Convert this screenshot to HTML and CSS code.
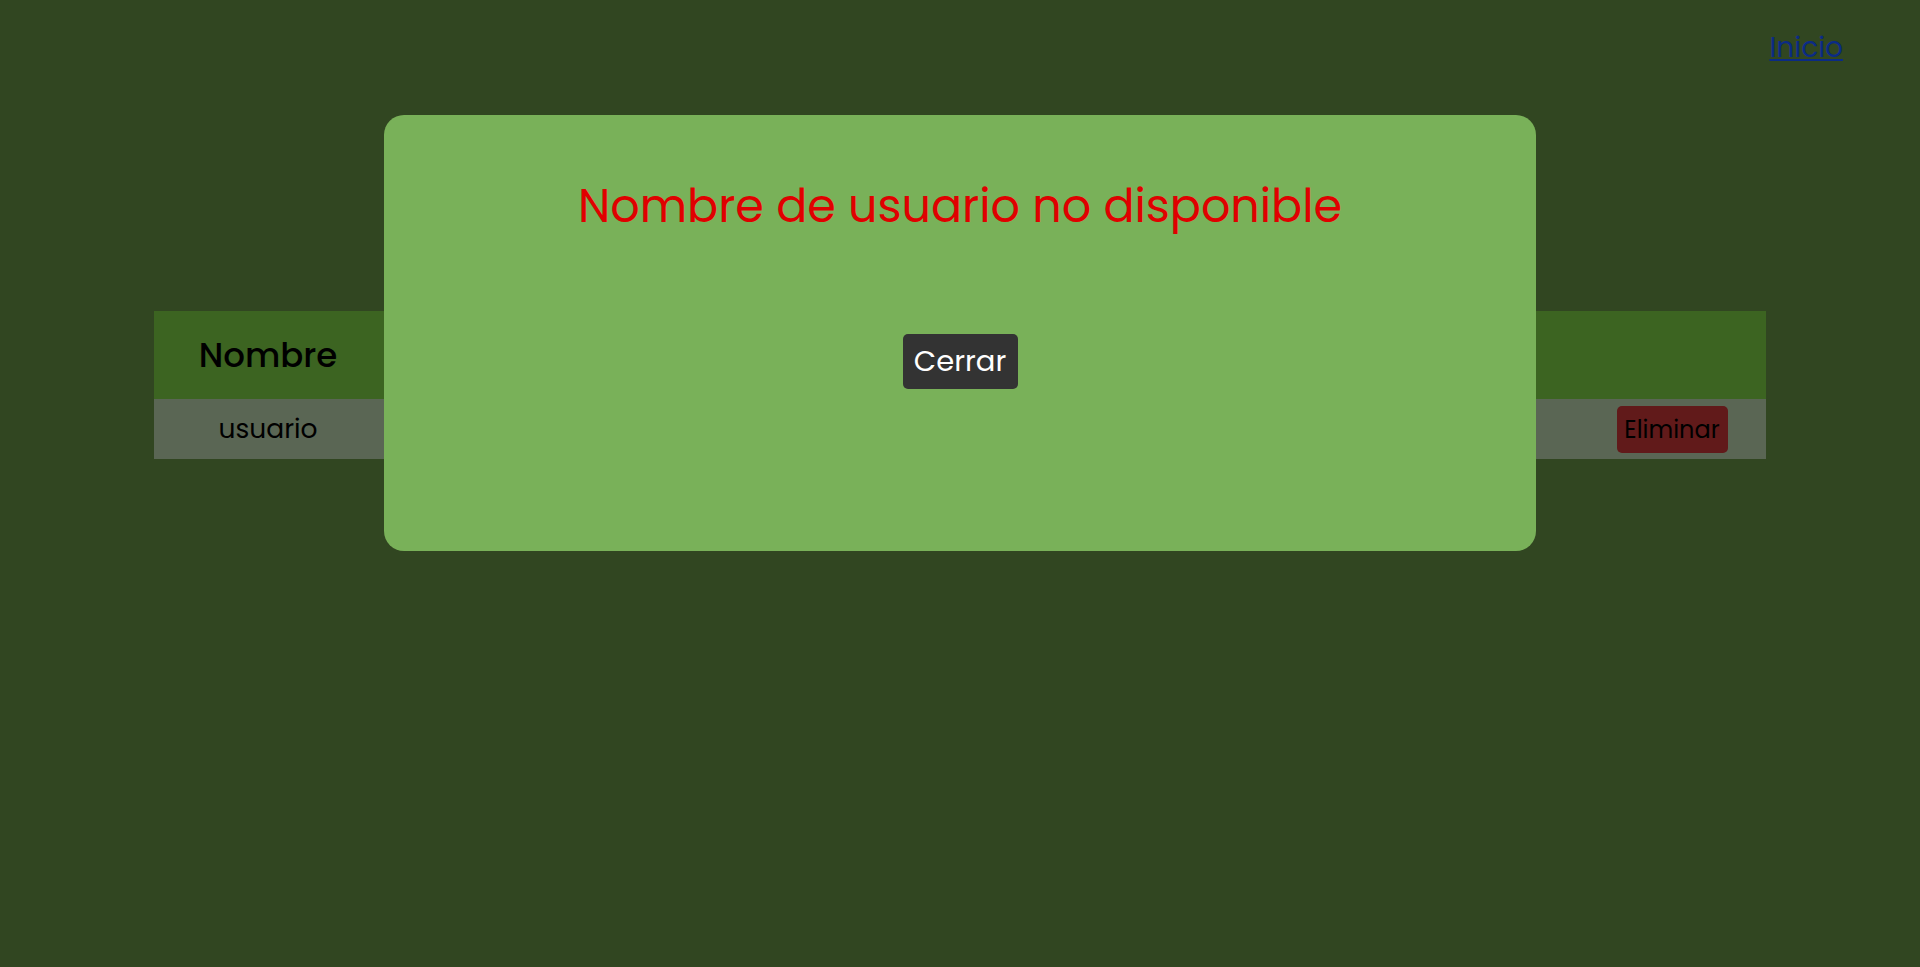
FILE: index.html
```html
<!DOCTYPE html>
<html lang="es">
<head>
<meta charset="utf-8">
<title>Usuarios</title>
<link rel="stylesheet" href="styles.css">
</head>
<body>
<nav class="nav">
  <a class="nav-link" href="#">Inicio</a>
</nav>
<main class="main">
  <table class="users">
    <thead>
      <tr>
        <th class="col-name">Nombre</th>
        <th class="col-mid"></th>
        <th class="col-action"></th>
      </tr>
    </thead>
    <tbody>
      <tr>
        <td class="col-name">usuario</td>
        <td class="col-mid"></td>
        <td class="col-action"><button class="btn-delete">Eliminar</button></td>
      </tr>
    </tbody>
  </table>
</main>
<div class="modal">
  <h1 class="modal-title">Nombre de usuario no disponible</h1>
  <button class="btn-close">Cerrar</button>
</div>
</body>
</html>
```

FILE: styles.css
```css
html, body {
  margin: 0;
  padding: 0;
  height: 100%;
}
body {
  background: #314621;
  font-family: Poppins, Inter, "DejaVu Sans", sans-serif;
  color: #000;
}
.nav {
  display: flex;
  justify-content: flex-end;
  padding: 28px 77px 0 0;
  height: 60px;
}
.nav-link {
  color: #0b2b86;
  font-size: 28px;
  text-decoration: underline;
  line-height: 40px;
}
.main {
  padding-top: 223px;
}
.users {
  width: 1612px;
  margin: 0 auto;
  border-collapse: collapse;
}
.users th {
  background: #3c6421;
  height: 88px;
  padding: 0;
  font-size: 34px;
  font-weight: 500;
}
.users td {
  background: #5a6654;
  height: 60px;
  padding: 0;
  font-size: 26.5px;
  text-align: center;
}
.col-name { width: 228px; }
.col-action { width: 188px; }
.btn-delete {
  background: #611a1a;
  color: #000;
  border: none;
  border-radius: 5px;
  font-family: inherit;
  font-size: 24px;
  height: 47px;
  width: 111px;
  padding: 0;
  vertical-align: middle;
}
.modal {
  position: fixed;
  top: 115px;
  left: 384px;
  width: 1152px;
  height: 436px;
  box-sizing: border-box;
  background: #79b159;
  border-radius: 20px;
  display: flex;
  flex-direction: column;
  align-items: center;
}
.modal-title {
  margin: 62px 0 0;
  color: #e00000;
  font-size: 46px;
  font-weight: 400;
  line-height: 58px;
}
.btn-close {
  margin-top: 99px;
  background: #333333;
  color: #fff;
  border: none;
  border-radius: 5px;
  font-family: inherit;
  font-size: 29px;
  height: 55px;
  width: 115px;
  padding: 0;
}
```
